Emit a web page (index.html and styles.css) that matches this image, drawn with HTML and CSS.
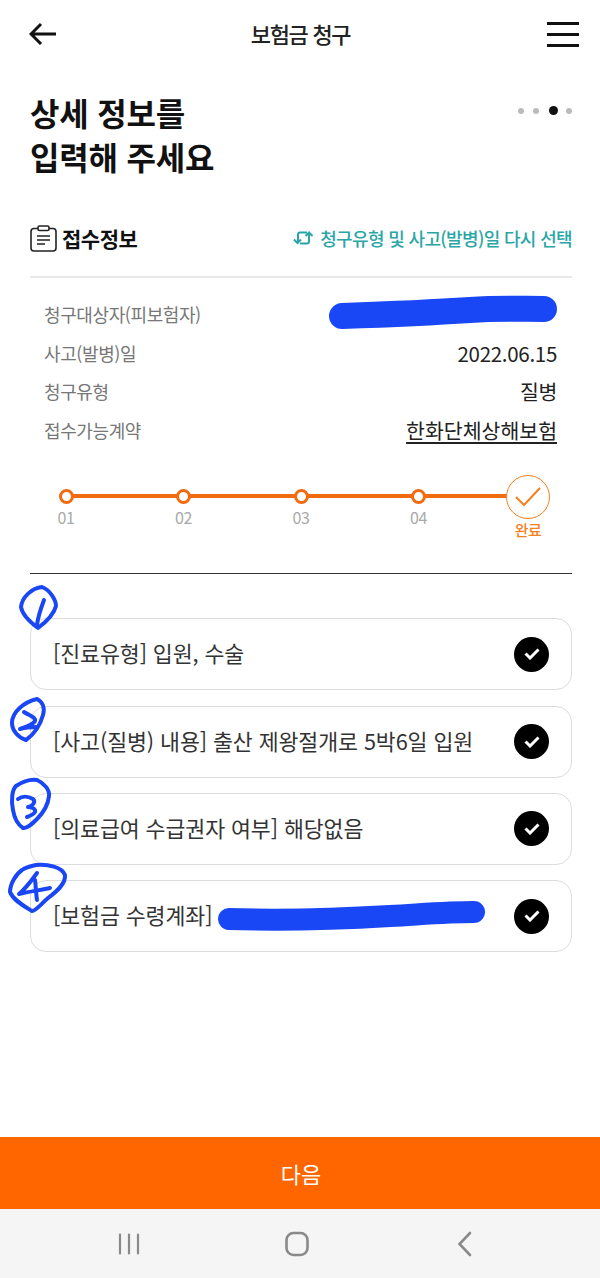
FILE: index.html
```html
<!DOCTYPE html>
<html lang="ko">
<head>
<meta charset="utf-8">
<title>보험금 청구</title>
<link rel="stylesheet" href="styles.css">
</head>
<body>
<div class="page">
  <header class="topbar">
    <svg class="back" width="28" height="24" viewBox="0 0 28 24"><path d="M27 12H2M12 2 2 12l10 10" fill="none" stroke="#111" stroke-width="3"/></svg>
    <h1 class="topbar-title">보험금 청구</h1>
    <div class="menu"><span></span><span></span><span></span></div>
  </header>

  <section class="intro">
    <h2 class="headline">상세 정보를<br>입력해 주세요</h2>
    <div class="pager"><i></i><i></i><i class="on"></i><i></i></div>
  </section>

  <section class="info-head">
    <div class="info-title">
      <svg width="27" height="27" viewBox="0 0 27 27" fill="none" stroke="#222" stroke-width="1.6"><rect x="1" y="3.500" width="25" height="22.500" rx="3"/><rect x="8" y="1" width="11" height="4.500" rx="1.500" fill="#fff"/><path d="M7 11h13M7 15h13M7 19h8"/></svg>
      <strong>접수정보</strong>
    </div>
    <a class="reselect">
      <svg width="21" height="16" viewBox="0 0 21 16" fill="none" stroke="#2ba6a6" stroke-width="2"><path d="M5 12V4.500a2 2 0 0 1 2-2h7M16 3.500V11.500a2 2 0 0 1-2 2H7"/><path d="M1 9.500l3.500 3.500L8 9.500M12.500 6 16 2.500 19.500 6"/></svg>
      청구유형 및 사고(발병)일 다시 선택
    </a>
  </section>

  <dl class="info-list">
    <div class="info-row"><dt>청구대상자(피보험자)</dt><dd></dd></div>
    <div class="info-row"><dt>사고(발병)일</dt><dd>2022.06.15</dd></div>
    <div class="info-row"><dt>청구유형</dt><dd>질병</dd></div>
    <div class="info-row"><dt>접수가능계약</dt><dd class="link">한화단체상해보험</dd></div>
  </dl>

  <ol class="steps">
    <li class="step"><span class="dot"></span><span class="num">01</span></li>
    <li class="step"><span class="dot"></span><span class="num">02</span></li>
    <li class="step"><span class="dot"></span><span class="num">03</span></li>
    <li class="step"><span class="dot"></span><span class="num">04</span></li>
    <li class="step done">
      <span class="done-mark"><svg width="28" height="22" viewBox="0 0 28 22" fill="none" stroke="#f5801f" stroke-width="2"><path d="M2 11l8 8L26 2"/></svg></span>
      <span class="num">완료</span>
    </li>
  </ol>

  <div class="cards">
    <div class="card"><span class="card-text">[진료유형] 입원, 수술</span><span class="check"><svg width="16" height="12" viewBox="0 0 16 12" fill="none" stroke="#fff" stroke-width="3"><path d="M1.500 5.500 6 10l8.500-8.500"/></svg></span></div>
    <div class="card"><span class="card-text">[사고(질병) 내용] 출산 제왕절개로 5박6일 입원</span><span class="check"><svg width="16" height="12" viewBox="0 0 16 12" fill="none" stroke="#fff" stroke-width="3"><path d="M1.500 5.500 6 10l8.500-8.500"/></svg></span></div>
    <div class="card"><span class="card-text">[의료급여 수급권자 여부] 해당없음</span><span class="check"><svg width="16" height="12" viewBox="0 0 16 12" fill="none" stroke="#fff" stroke-width="3"><path d="M1.500 5.500 6 10l8.500-8.500"/></svg></span></div>
    <div class="card"><span class="card-text">[보험금 수령계좌]</span><span class="check"><svg width="16" height="12" viewBox="0 0 16 12" fill="none" stroke="#fff" stroke-width="3"><path d="M1.500 5.500 6 10l8.500-8.500"/></svg></span></div>
  </div>

  <button class="next">다음</button>

  <nav class="sysnav">
    <svg width="24" height="24" viewBox="0 0 24 24" stroke="#8a8a8a" stroke-width="2.200" stroke-linecap="round"><path d="M3 2.500v19M12 2.500v19M21 2.500v19"/></svg>
    <svg class="home" width="24" height="26" viewBox="0 0 24 26" fill="none" stroke="#8a8a8a" stroke-width="2.600"><rect x="1.500" y="2" width="21" height="22" rx="7"/></svg>
    <svg width="16" height="26" viewBox="0 0 16 26" fill="none" stroke="#8a8a8a" stroke-width="2.600" stroke-linecap="round"><path d="M13 2 2.500 13 13 24"/></svg>
  </nav>

  <!-- 손으로 그린 표시: 번호와 가림 -->
  <svg class="scribbles" width="600" height="1278" viewBox="0 0 600 1278" fill="none" stroke="#1a47f5" stroke-linecap="round" stroke-linejoin="round">
    <path stroke-width="26" d="M342 316C400 314 440 312 470 310S520 309 544 309"/>
    <path stroke-width="22" d="M229 919C290 921 340 919 390 916S450 912 474 912"/>
    <g stroke-width="4">
      <path d="M42 587C50 590 56 600 56 606C54 614 46 622 38 628C30 622 22 614 21 607C22 597 32 588 42 587Z"/>
      <path d="M44 600C41 608 38 616 37 625"/>
      <path d="M37 699C43 702 45 708 43 715C40 726 33 735 26 740C19 738 12 731 12 723C12 712 24 702 37 699Z"/>
      <path d="M24 712C30 716 36 717 35 721C33 725 26 727 20 729C27 727 32 727 37 727"/>
      <path d="M37 780C44 783 50 790 49 796C48 806 42 814 37 819C32 824 27 829 23 828C17 824 14 816 13 810C11 800 12 790 16 786C22 782 30 779 37 780Z"/>
      <path d="M18 799C22 796 28 796 33 799C36 802 33 806 28 807C32 807 36 809 35 812C33 815 30 816 27 817"/>
      <path d="M36 865C48 864 62 867 65 875C66 884 56 892 48 898C42 903 36 911 32 911C24 906 13 900 10 892C10 884 16 874 22 870C26 867 32 866 36 865Z"/>
      <path d="M37 873C32 880 25 889 19 894C28 892 40 890 50 888"/>
      <path d="M35 880C36 887 36 894 37 900"/>
    </g>
  </svg>
</div>
</body>
</html>
```

FILE: styles.css
```css
* {
	box-sizing: border-box;
}
html, body {
	margin: 0;
	padding: 0;
}
body {
	background: #fff;
	color: #222;
	font-family: "Noto Sans CJK KR", "Noto Sans", sans-serif;
}
.page {
	position: relative;
	width: 600px;
	height: 1278px;
	display: flex;
	flex-direction: column;
	overflow: hidden;
}

/* top bar */
.topbar {
	height: 68px;
	flex: none;
	padding: 0 21px 0 29px;
	display: flex;
	align-items: center;
	justify-content: space-between;
}
.back {
	flex: none;
}
.topbar-title {
	margin: 0 3px 3px 0;
	font-size: 22px;
	line-height: 30px;
	font-weight: 500;
	letter-spacing: -1.3px;
	color: #222;
}
.menu {
	width: 32px;
	height: 25px;
	display: flex;
	flex-direction: column;
	justify-content: space-between;
}
.menu span {
	display: block;
	height: 3px;
	background: #111;
}

/* heading */
.intro {
	height: 136px;
	flex: none;
	padding: 22px 28px 0 30px;
	display: flex;
	justify-content: space-between;
	align-items: flex-start;
}
.headline {
	margin: 0;
	font-size: 32px;
	line-height: 44px;
	font-weight: 700;
	letter-spacing: -0.2px;
	color: #111;
}
.pager {
	display: flex;
	align-items: center;
	gap: 9px;
	margin-top: 16px;
}
.pager i {
	width: 6px;
	height: 6px;
	border-radius: 50%;
	background: #bbb;
}
.pager i.on {
	width: 9px;
	height: 9px;
	margin: 0 -1px 0 1px;
	background: #111;
}

/* section title */
.info-head {
	height: 74px;
	flex: none;
	margin: 0 28px 0 30px;
	padding-bottom: 4px;
	border-bottom: 2px solid #e8e8e8;
	display: flex;
	justify-content: space-between;
	align-items: center;
}
.info-title {
	display: flex;
	align-items: center;
	gap: 5px;
}
.info-title strong {
	font-size: 21px;
	line-height: 28px;
	font-weight: 700;
	letter-spacing: -0.5px;
	color: #111;
}
.reselect {
	display: flex;
	align-items: center;
	gap: 6px;
	font-size: 18px;
	line-height: 26px;
	font-weight: 500;
	letter-spacing: -0.65px;
	color: #2ba6a6;
}

/* summary rows */
.info-list {
	margin: 0;
	padding: 17px 43px 0 44px;
	flex: none;
}
.info-row {
	height: 38.6px;
	display: flex;
	justify-content: space-between;
	align-items: center;
}
.info-row dt {
	font-size: 18px;
	letter-spacing: -0.4px;
	color: #777;
}
.info-row dd {
	margin: 0;
	font-size: 20.500px;
	letter-spacing: -0.3px;
	color: #222;
}
.info-row dd.link {
	letter-spacing: 0;
	text-decoration: underline;
	text-underline-offset: 3px;
}

/* progress */
.steps {
	list-style: none;
	position: relative;
	height: 125px;
	flex: none;
	margin: 0 28px 0 30px;
	padding: 34px 0 0 24px;
	display: flex;
	border-bottom: 1.500px solid #333;
}
.steps::before {
	content: "";
	position: absolute;
	left: 36px;
	top: 45px;
	width: 442px;
	height: 4px;
	background: #f26b10;
}
.step {
	position: relative;
	display: flex;
	flex-direction: column;
	align-items: center;
	width: 24px;
	margin-right: 93.500px;
	padding-top: 6px;
}
.dot {
	width: 15px;
	height: 15px;
	border: 3px solid #f26b10;
	border-radius: 50%;
	background: #fff;
}
.num {
	margin-top: 1px;
	font-size: 16px;
	line-height: 24px;
	letter-spacing: -0.5px;
	color: #aaa;
}
.step.done {
	margin: -8px 0 0 -18px;
	width: 44px;
	padding-top: 0;
}
.done-mark {
	width: 44px;
	height: 44px;
	flex: none;
	border: 1.500px solid #f5801f;
	border-radius: 50%;
	background: #fff;
	display: flex;
	align-items: center;
	justify-content: center;
}
.done .num {
	margin-top: -1px;
	white-space: nowrap;
	font-size: 15px;
	font-weight: 500;
	color: #f5801f;
}

/* confirmed items */
.cards {
	margin: 44px 28px 0 30px;
	display: flex;
	flex-direction: column;
	gap: 15.300px;
}
.card {
	height: 72px;
	padding: 0 22px 0 22px;
	border: 1.500px solid #ddd;
	border-radius: 16px;
	display: flex;
	align-items: center;
	justify-content: space-between;
	font-size: 21.700px;
	letter-spacing: -0.1px;
	color: #333;
}
.card-text {
	margin-bottom: 3px;
}
.check {
	width: 35px;
	height: 35px;
	flex: none;
	border-radius: 50%;
	background: #000;
	display: flex;
	align-items: center;
	justify-content: center;
}

/* bottom */
.next {
	margin-top: auto;
	height: 72px;
	flex: none;
	border: 0;
	background: #ff6600;
	color: #fff;
	font-family: inherit;
	font-size: 22px;
	padding: 0 0 0 2px;
}
.sysnav {
	height: 69px;
	flex: none;
	background: #f5f5f5;
	padding: 0 127px 0 117px;
	display: flex;
	align-items: center;
	justify-content: space-between;
}
.home {
	margin-right: 4px;
}

/* drawn over the screenshot by hand */
.scribbles {
	position: absolute;
	left: 0;
	top: 0;
	pointer-events: none;
}
```
